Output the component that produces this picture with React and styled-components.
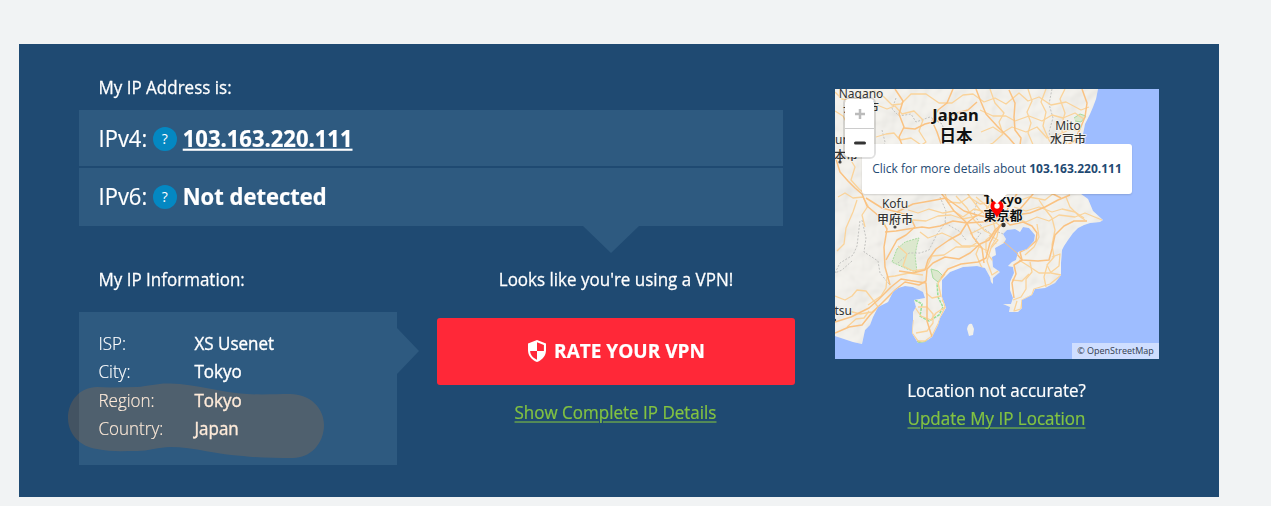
import React from 'react';
import styled, { createGlobalStyle, css } from 'styled-components';

const GlobalStyle = createGlobalStyle`
  * {
    box-sizing: border-box;
  }

  body {
    margin: 0;
    background: #f1f3f4;
    font-family: "Open Sans", "Noto Sans", "Noto Sans CJK JP", sans-serif;
    color: #fff;
    overflow: hidden;
  }
`;

// slightly taller letters at the same text width
const tall = css`
  transform: scaleY(1.06);
`;

const Page = styled.div`
  height: 506px;
  padding: 44px 0 0 19px;
`;

const Panel = styled.main`
  display: grid;
  grid-template-columns: 716px 324px;
  column-gap: 40px;
  width: 1200px;
  height: 453px;
  padding: 0 60px;
  background: #1f4a72;
`;

const Heading = styled.h2`
  margin: 0;
  padding-left: ${(p) => (p.$center ? 0 : '19.5px')};
  font-size: 17px;
  font-weight: 400;
  line-height: 28px;
  text-align: ${(p) => (p.$center ? 'center' : 'left')};
  -webkit-text-stroke: 0.25px #fff;
  ${tall}
`;

const Addresses = styled.section`
  position: relative;
  width: 704px;
  padding-top: 30px;

  &::after {
    content: '';
    position: absolute;
    top: 100%;
    left: 504px;
    border: 28px solid transparent;
    border-top: 27px solid #2e5a80;
    border-bottom: 0;
  }
`;

const AddressRow = styled.div`
  display: flex;
  align-items: center;
  height: ${(p) => p.$height}px;
  margin-top: ${(p) => p.$gap}px;
  padding: 0 19.5px ${(p) => p.$height - 53}px;
  background: #2e5a80;
  font-size: 22px;
  line-height: 30px;
`;

const Protocol = styled.span`
  -webkit-text-stroke: 0.15px #fff;
  ${tall}
`;

const Help = styled.span`
  width: 24px;
  height: 24px;
  margin: 4px 6px 0 5.5px;
  border-radius: 50%;
  background: #0488c2;
  font-size: 14px;
  font-weight: 500;
  line-height: 24px;
  text-align: center;
`;

const Address = styled.strong`
  font-weight: 700;
  text-decoration: ${(p) => (p.$link ? 'underline' : 'none')};
  text-decoration-thickness: 2px;
  text-underline-offset: 2px;
  -webkit-text-stroke: 0.2px #fff;
  ${tall}
`;

const Lower = styled.div`
  display: grid;
  grid-template-columns: 318px 358px;
  column-gap: 40px;
  padding-top: 40px;
`;

const InfoBox = styled.div`
  position: relative;
  height: 153px;
  margin-top: 18px;
  padding: 18px 19.5px;
  background: #2e5a80;

  &::after {
    content: '';
    position: absolute;
    left: 100%;
    top: 16px;
    border: 23px solid transparent;
    border-left: 22px solid #2e5a80;
    border-right: 0;
  }
`;

const InfoList = styled.dl`
  display: grid;
  grid-template-columns: 96px 1fr;
  grid-auto-rows: 28.3px;
  margin: 0;
  font-size: 17px;
  line-height: 28px;
`;

const Term = styled.dt`
  font-weight: 300;
  -webkit-text-stroke: 0.15px #fff;
  ${tall}
`;

const Value = styled.dd`
  margin: 0;
  -webkit-text-stroke: 0.35px #fff;
  ${tall}
`;

const Marking = styled.svg`
  position: absolute;
  left: -11px;
  top: 71px;
  z-index: 1;
`;

const RateButton = styled.button`
  display: flex;
  align-items: center;
  justify-content: center;
  gap: 8px;
  width: 100%;
  height: 67px;
  margin-top: 24px;
  padding: 0 0 1px 1px;
  border: 0;
  border-radius: 3px;
  background: #ff2838;
  color: #fff;
  font-family: inherit;
  font-size: 19px;
  font-weight: 700;
`;

const ButtonLabel = styled.span`
  -webkit-text-stroke: 0.2px #fff;
  ${tall}
`;

const CenterText = styled.p`
  margin: ${(p) => p.$top}px 0 0;
  padding-right: 1px;
  font-size: 17px;
  line-height: 28px;
  text-align: center;
`;

const TextLine = styled.span`
  display: block;
  -webkit-text-stroke: 0.2px currentColor;
  ${tall}
`;

const Link = styled.a`
  color: #83c341;
  text-decoration: underline;
  text-decoration-thickness: 1px;
  text-underline-offset: 2px;
  -webkit-text-stroke: 0.2px #83c341;
`;

const MapColumn = styled.aside`
  padding-top: 45px;
`;

const MapFrame = styled.div`
  position: relative;
  height: 270px;
  overflow: hidden;
  background: #9ebdff;
`;

const MapArt = styled.svg`
  display: block;
`;

const ZoomControl = styled.div`
  position: absolute;
  left: 8px;
  top: 8px;
  width: 33px;
  border: 2px solid rgba(0, 0, 0, 0.12);
  border-radius: 6px;
  background-clip: padding-box;
`;

const ZoomButton = styled.div`
  display: flex;
  align-items: center;
  justify-content: center;
  height: ${(p) => (p.$first ? 30 : 28)}px;
  border-bottom: ${(p) => (p.$first ? '1px solid #ccc' : '0')};
  border-radius: ${(p) => (p.$first ? '4px 4px 0 0' : '0 0 4px 4px')};
  background: #fff;
`;

const Popup = styled.div`
  position: absolute;
  left: 27px;
  top: 55px;
  width: 270px;
  height: 50px;
  border-radius: 3px;
  background: #fff;
  box-shadow: 0 1px 2px rgba(0, 0, 0, 0.14);
  color: #1f4a72;
  font-size: 12px;
  line-height: 49px;
  text-align: center;
  white-space: nowrap;

  &::after {
    content: '';
    position: absolute;
    left: 125px;
    top: 100%;
    border: 10px solid transparent;
    border-top-color: #fff;
    border-bottom: 0;
  }
`;

const Pin = styled.svg`
  position: absolute;
  left: 155px;
  top: 111px;
`;

const Attribution = styled.div`
  position: absolute;
  right: 0;
  bottom: 0;
  width: 87px;
  height: 16px;
  background: rgba(255, 255, 255, 0.5);
  color: #333c4e;
  font-size: 9px;
  line-height: 16px;
  text-align: center;
`;

const LAND = `M0 0H263L261 10L258 18L255 25L250 35L248 45L247 55L245 80L244 95L246 105L253 110L258 122L268 131L265 133L255 134
  L249 136L243 139L238 144L233 151L229 157L227 161L226 174L226 186L220 194L210 199L200 200L197 206L187 211L187 219L183 223
  H174L175 218L168 215L176 215L178 209L175 201L175 193L179 184L178 178L173 177L177 173L181 171L183 163L192 160L199 152
  L200 146L194 139L188 138L185 143L180 140L172 141L168 145L171 150L169 154L160 159L161 166L157 168L158 178L165 183
  L158 189L158 195L156 193L155 188L150 179L142 177L128 178L115 183L107 191L107 208L111 219L105 229L103 236L97 248
  L90 253L83 254L77 244L78 231L78 223L81 218L79 211L90 209L88 203L78 198L70 197L63 199L58 203L53 213L43 218L38 228
  L35 236L30 241L27 255L18 253L0 247Z`;

const MAIN_ROADS = [
  'M0 67L5 83L13 92L20 99L27 105L32 117L45 128L52 140L49 158L50 178L55 196',
  'M0 244L14 238L27 236L35 226L47 214L60 201L70 193L84 196L91 192L92 180L98 174L110 168L124 170L135 164L145 155L154 151L160 141L168 134',
  'M0 233L16 228L34 219L43 211L56 198L66 190L78 192L91 194L92 207L92 232L97 248',
  'M50 143L61 142L73 140L87 138L94 139L105 137L118 132L132 134L147 133L159 132L167 129',
  'M31 109L47 119L62 123L78 115L95 112L111 109L129 122L142 126L156 129L168 130L181 126L195 124L210 118L223 111L235 106',
  'M168 133L161 143L155 154L151 169L143 173L126 175L113 180L106 189',
  'M169 153L181 164L187 171L203 172L214 171L217 160L220 146L229 137L239 132L252 132',
  'M168 130L175 136L188 133L197 137L202 144L201 152L193 159L185 163L187 171L179 176L181 185L177 194L179 209',
  'M118 0L112 14L103 21L97 32L102 43L106 55L97 66L103 81L100 96L110 109L119 122L132 134L138 148L147 159L149 174',
  'M141 0L146 13L151 25L162 37L174 49L186 63L193 77L192 92L181 106L173 119L168 131',
  'M174 1L180 14L179 28L180 41L186 49L184 63L191 77L206 90L216 104L226 109',
  'M247 0L252 14L250 28L245 40L239 52L226 60L216 72L208 88L198 105L185 120L170 130',
  'M60 0L68 12L64 25L69 38L64 48L69 61L68 72',
  'M69 39L80 40L90 35L98 33L111 30L122 24L133 21L142 13',
  'M64 182L78 184L90 181L93 171L101 160L114 151L125 145L132 134L142 126',
  'M51 171L57 160L62 151L71 146L80 138L75 127L62 123',
];

const ROADS = [
  'M0 3L7 10L17 12L28 5L40 2L49 8L57 16L66 15L76 5L91 5L104 14L117 14L128 6L138 5L149 13L160 9L171 15L184 4L193 12L204 8L216 16L231 13L246 21L254 18',
  'M0 22L8 27L14 38L12 49L18 58L14 68L20 78L16 91L24 100L29 104',
  'M42 16L52 20L60 17L67 25L79 22L88 31L84 42L91 53L82 59L76 68',
  'M41 48L51 45L59 44L65 51L76 49L89 58L97 67',
  'M145 21L158 27L171 27L180 32L194 27L207 32L217 26L228 29L240 24L249 30',
  'M146 43L158 38L167 44L177 38L191 43L202 38L212 49L225 45L236 40L245 42',
  'M155 0L160 14L169 24L164 33L168 45L158 54L147 59',
  'M193 0L197 12L192 23L196 34L193 44L199 58',
  'M211 0L206 13L211 23L208 37L213 49L219 61',
  'M230 0L225 10L230 24L226 38L229 50L234 59',
  'M3 108L10 104L18 109L28 108L33 117L27 126L30 138',
  'M2 162L9 155L11 139L18 123L22 111',
  'M0 207L10 211L17 207L22 201L31 202L38 211L43 218L37 223L25 225L14 222',
  'M12 238L21 230L29 229L34 222',
  'M33 216L46 207L51 199L52 188L60 187L74 184L88 186',
  'M73 121L83 124L94 120L108 124L119 122L128 128L139 120L151 123L160 117',
  'M85 143L93 149L107 144L116 148L127 157L142 157L153 162',
  'M63 157L72 165L68 177L78 182L91 180L97 167L109 166L121 158L135 158L143 153',
  'M91 204L97 209L106 207L103 194L110 185',
  'M107 211L112 217L101 224L96 231L86 227L79 217',
  'M83 218L92 218L98 225L98 234L92 242L81 244',
  'M110 105L113 113L125 114L134 108L145 115L158 113',
  'M121 107L132 119L139 131L150 142L158 146',
  'M132 104L145 121L158 132L161 143L151 151L151 163L158 172',
  'M141 108L154 119L168 130L158 135L149 138L135 145',
  'M155 103L151 115L154 129L164 136L162 148L156 158',
  'M166 131L178 128L191 133L202 128L214 132L224 126L240 128L250 124L267 131',
  'M166 104L181 113L194 108L210 111L219 104',
  'M179 118L191 122L204 118L217 123L227 120L240 123L249 129',
  'M204 111L210 120L217 129L220 141L217 156L219 168L212 176L216 184L226 186',
  'M231 108L235 118L244 127L250 131',
  'M202 135L204 148L199 158L190 166',
  'M184 171L195 178L204 184L215 184L224 177L225 165L217 168',
  'M195 173L197 183L191 190L191 200L186 208L178 211',
  'M177 191L187 192L194 185',
  'M212 177L209 188L211 198',
  'M182 212L179 222L186 220L187 211L197 206L199 200L215 195L225 187',
  'M158 106L153 119L142 127L128 130L116 126L103 127L91 132L78 131',
  'M154 146L163 151L156 159L152 172L157 186L163 182',
  'M145 155L141 165L146 177L155 189',
  'M78 231L77 244L83 252L90 252L97 247L103 235L106 227L110 218L107 207',
];

const BORDERS = [
  'M47 41L50 53L46 63L57 76L69 77',
  'M61 9L57 20L64 27L76 25L81 33L95 28L107 35L112 49',
  'M217 0L214 15L218 29L214 43L217 54',
  'M27 131L31 149L29 163L43 172L45 184L54 195',
  'M111 133L102 145L94 161L85 164L74 164L63 174',
  'M105 108L111 122L110 134L124 142L131 151',
  'M142 113L139 125L147 138L155 144L161 155',
  'M17 172L7 181L0 184L5 174L18 166L22 157L25 131',
  'M163 143L171 146L177 158L169 170L165 190',
  'M139 142L146 144L140 152L147 159',
];

function MapDrawing() {
  return (
    <MapArt width="324" height="270" viewBox="0 0 324 270">
      <defs>
        <filter id="relief" x="0" y="0" width="100%" height="100%">
          <feTurbulence type="fractalNoise" baseFrequency="0.035" numOctaves="3" seed="8" />
          <feDiffuseLighting surfaceScale="5" lightingColor="#fffffb">
            <feDistantLight azimuth="225" elevation="62" />
          </feDiffuseLighting>
          <feComposite operator="in" in2="SourceGraphic" />
        </filter>
        <clipPath id="land">
          <path d={LAND} />
        </clipPath>
      </defs>
      <path d={LAND} fill="#f2f0eb" />
      <path d={LAND} fill="#fff" filter="url(#relief)" opacity="0.22" />
      <path d="M132 240Q133 234 137 235L139 240L138 246L134 247Z" fill="#f1f0eb" />
      <g clipPath="url(#land)" fill="none" strokeLinejoin="round">
        <path d="M62 160L70 153L80 150L84 149L82 156L80 166L82 183L72 180L57 173Z" fill="#dce8ce" stroke="#a9dba1" strokeDasharray="2 1" />
        <path d="M96 180L103 182L108 187L103 193L98 189Z" fill="#dce8ce" stroke="#a9dba1" />
        <path d="M80 211L87 215L85 227L94 232L104 226L108 218L103 208L102 194" stroke="#9adf97" strokeWidth="1.5" strokeDasharray="3 1" />
        <path d="M239 29L245 25L251 27L246 33L240 32" fill="#dce8ce" stroke="#a9dba1" />
        <path d="M82 252L87 254L93 252" stroke="#91d68a" strokeWidth="2" />
        {BORDERS.map((d) => (
          <path key={d} d={d} stroke="#c3c3c0" strokeDasharray="2 1.5" />
        ))}
        {ROADS.map((d) => (
          <path key={d} d={d} stroke="#fad39a" strokeWidth="1.3" />
        ))}
        {MAIN_ROADS.map((d) => (
          <path key={d} d={d} stroke="#fac282" strokeWidth="1.5" />
        ))}
      </g>
      <path d="M169 153L183 165" stroke="#f3c28b" />
      <g
        fontFamily='"Noto Sans", "Noto Sans CJK JP", sans-serif'
        fontSize="12"
        textAnchor="middle"
        fill="#333"
        stroke="#f5f4ef"
        strokeWidth="1.5"
        paintOrder="stroke"
      >
        <text x="26" y="8.500">Nagano</text>
        <text x="26" y="23" fontWeight="500">長野市</text>
        <text x="5" y="55">Matsumoto</text>
        <text x="5" y="71" fontWeight="500">松本市</text>
        <text x="233" y="40.500">Mito</text>
        <text x="233" y="55" fontWeight="500">水戸市</text>
        <text x="60" y="119">Kofu</text>
        <text x="60" y="135" fontWeight="500">甲府市</text>
        <text x="17" y="226" textAnchor="end">Hamamatsu</text>
        <g fill="#111" fontWeight="700">
          <text x="120.500" y="31.500" fontSize="16.500">Japan</text>
          <text x="121" y="52.500" fontSize="16.500">日本</text>
          <text x="168" y="115" fontSize="13">Tokyo</text>
          <text x="168" y="131" fontSize="13">東京都</text>
        </g>
      </g>
      <circle cx="168.500" cy="136" r="2.200" fill="#333" />
      <circle cx="60" cy="138" r="1.600" fill="#444" />
      <circle cx="5" cy="73" r="1.600" fill="#444" />
      <circle cx="0" cy="231" r="1.200" fill="#444" />
    </MapArt>
  );
}

function LocationMap() {
  return (
    <MapFrame>
      <MapDrawing />
      <Pin width="14" height="18" viewBox="0 0 14 18">
        <path d="M7 18C5.500 13.500 0.500 11 0.500 6.500C0.500 2.500 3.500 0 7 0C10.500 0 13.500 2.500 13.500 6.500C13.500 11 8.500 13.500 7 18Z" fill="#f00" />
        <circle cx="7" cy="6" r="2.700" fill="#fff" />
      </Pin>
      <Popup>
        Click for more details about <b>103.163.220.111</b>
      </Popup>
      <ZoomControl>
        <ZoomButton $first>
          <svg width="12" height="12" viewBox="0 0 12 12">
            <path d="M6 1V11M1 6H11" stroke="#bbb" strokeWidth="2.500" />
          </svg>
        </ZoomButton>
        <ZoomButton>
          <svg width="12" height="12" viewBox="0 0 12 12">
            <path d="M1.500 6H10.500" stroke="#333" strokeWidth="3" strokeLinecap="round" />
          </svg>
        </ZoomButton>
      </ZoomControl>
      <Attribution>© OpenStreetMap</Attribution>
    </MapFrame>
  );
}

function ShieldIcon() {
  return (
    <svg width="18" height="22" viewBox="0 0 18 22">
      <path d="M9 0L18 3.500V10C18 15.500 14.500 20 9 22C3.500 20 0 15.500 0 10V3.500Z" fill="#fff" />
      <path d="M9 2.300L15.900 5V11H9Z" fill="#ff2838" />
      <path d="M2.100 11H9V19.700C5.500 18.300 2.300 15.200 2.100 11Z" fill="#ff2838" />
    </svg>
  );
}

const info = [
  ['ISP:', 'XS Usenet'],
  ['City:', 'Tokyo'],
  ['Region:', 'Tokyo'],
  ['Country:', 'Japan'],
];

export default function App() {
  return (
    <Page>
      <GlobalStyle />
      <Panel>
        <div>
          <Addresses>
            <Heading>My IP Address is:</Heading>
            <AddressRow $height={56} $gap={8}>
              <Protocol>IPv4:</Protocol>
              <Help>?</Help>
              <Address $link>103.163.220.111</Address>
            </AddressRow>
            <AddressRow $height={58} $gap={2}>
              <Protocol>IPv6:</Protocol>
              <Help>?</Help>
              <Address>Not detected</Address>
            </AddressRow>
          </Addresses>
          <Lower>
            <section>
              <Heading>My IP Information:</Heading>
              <InfoBox>
                <InfoList>
                  {info.map(([label, value]) => (
                    <React.Fragment key={label}>
                      <Term>{label}</Term>
                      <Value>{value}</Value>
                    </React.Fragment>
                  ))}
                </InfoList>
                <Marking width="257" height="77" viewBox="68 383 257 77">
                  <path
                    d="M97 387C111 388 124 387 137 387C149 386 158 383 170 383.500C196 384 222 393 247 394C262 395 277 394 290 394C310 394 324 408 324 425C324 444 310 458 293 458C276 458 259 458 243 456C219 455 194 447 170 447C159 447 148 451 137 451C123 451 110 452 97 449C81 447 68 435 68 418C68 401 80 387 97 387Z"
                    fill="rgba(255, 130, 17, 0.16)"
                  />
                </Marking>
              </InfoBox>
            </section>
            <section>
              <Heading $center>Looks like you're using a VPN!</Heading>
              <RateButton>
                <ShieldIcon />
                <ButtonLabel>RATE YOUR VPN</ButtonLabel>
              </RateButton>
              <CenterText $top={14}>
                <TextLine>
                  <Link>Show Complete IP Details</Link>
                </TextLine>
              </CenterText>
            </section>
          </Lower>
        </div>
        <MapColumn>
          <LocationMap />
          <CenterText $top={18}>
            <TextLine>Location not accurate?</TextLine>
            <TextLine>
              <Link>Update My IP Location</Link>
            </TextLine>
          </CenterText>
        </MapColumn>
      </Panel>
    </Page>
  );
}
